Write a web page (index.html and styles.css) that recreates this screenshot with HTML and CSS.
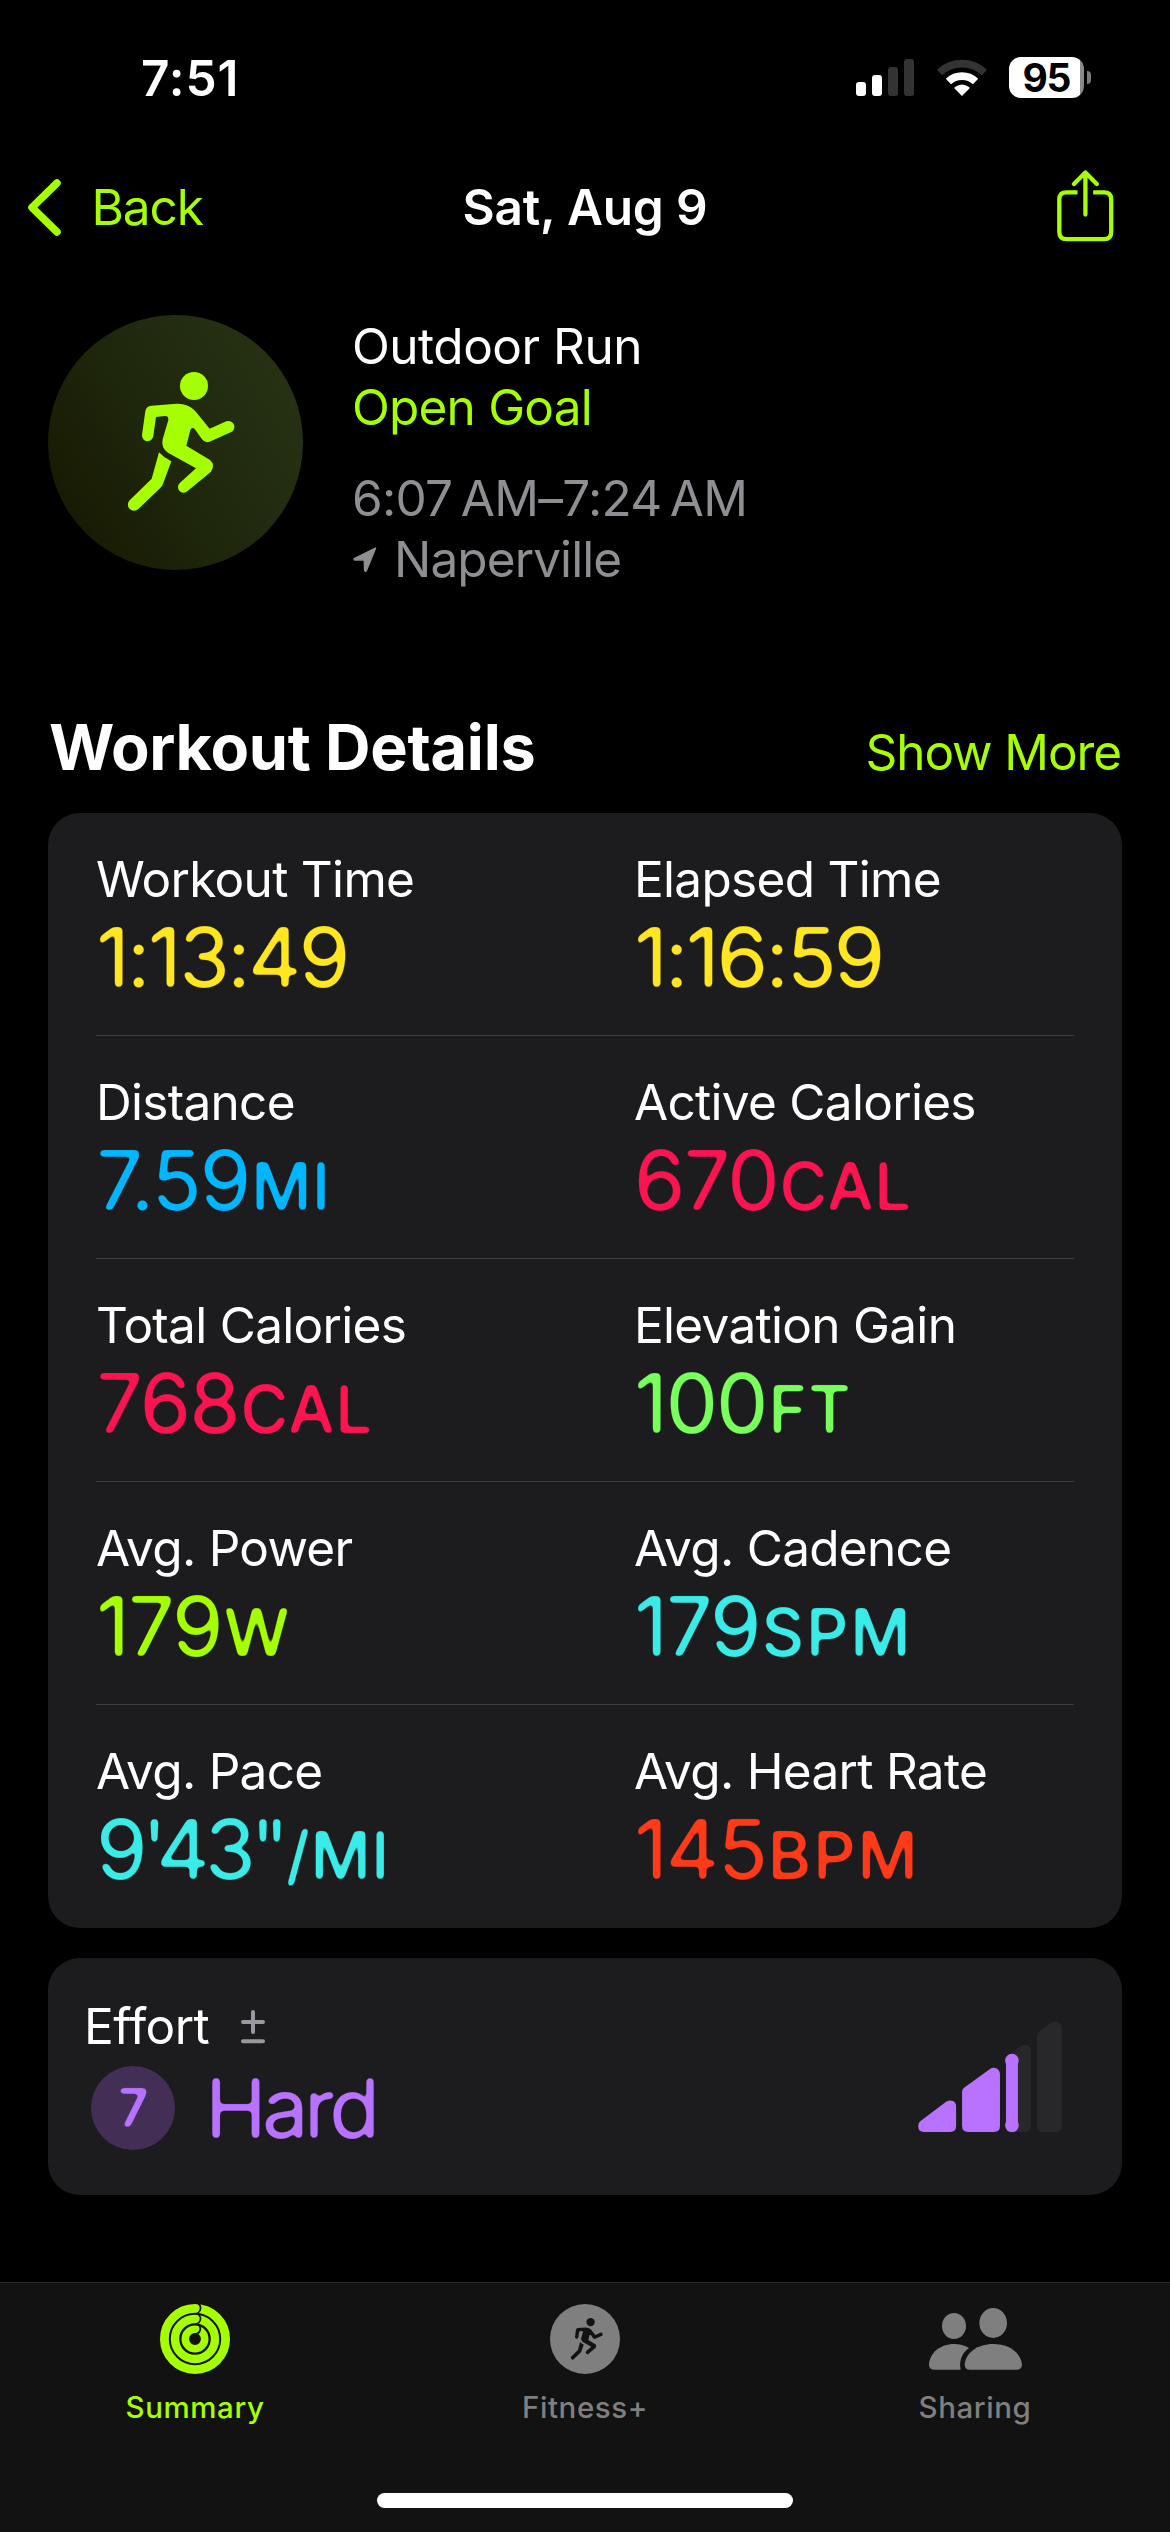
FILE: index.html
```
<!DOCTYPE html>
<html lang="en">
<head>
    <meta charset="UTF-8">
    <meta name="viewport" content="width=device-width, initial-scale=1.0">
    <title>Workout Summary</title>
    <link rel="stylesheet" href="styles.css">
</head>
<body>
    <!-- shared svg definitions -->
    <svg class="defs" width="0" height="0" aria-hidden="true">
        <filter id="rounded" x="-5%" y="-10%" width="110%" height="120%" color-interpolation-filters="sRGB">
            <feGaussianBlur stdDeviation="2.1"/>
            <feComponentTransfer>
                <feFuncA type="linear" slope="5" intercept="-2"/>
            </feComponentTransfer>
        </filter>
        <symbol id="runner" viewBox="54 45 765 765">
            <circle cx="492" cy="258" r="42"/>
            <path d="M364 317 L440 311 C468 310 486 321 500 338 L539 386 L589 364 A17 17 0 0 1 602 397 L539 425 Q525 430 516 418 L494 387 Q486 379 481 390 L469 437 L540 480 Q557 495 543 515 L472 574 A17 17 0 0 1 450 548 L498 505 L414 458 Q392 444 398 418 L415 360 Q416 348 406 348 L378 351 L370 408 A17 17 0 0 1 336 405 L346 333 Q349 318 364 317 Z"/>
            <path d="M387 457 Q402 474 424 484 L400 549 Q397 559 390 565 L325 627 A18 18 0 0 1 299 601 L365 536 Z"/>
        </symbol>
    </svg>

    <header class="status-bar">
        <span class="time">7:51</span>
        <div class="status-icons">
            <svg width="58" height="41" viewBox="0 0 58 41">
                <rect x="0" y="25" width="10" height="14" rx="3" fill="#fff"/>
                <rect x="16" y="18" width="10" height="21" rx="3" fill="#fff"/>
                <rect x="32" y="10" width="10" height="29" rx="3" fill="#333"/>
                <rect x="48" y="2" width="10" height="37" rx="3" fill="#333"/>
            </svg>
            <svg width="50" height="41" viewBox="0 0 50 41">
                <path d="M2.5 15.5 A33 33 0 0 1 47.5 15.5" fill="none" stroke="#333" stroke-width="7.6"/>
                <path d="M11.4 24.5 A19.8 19.8 0 0 1 38.6 24.5" fill="none" stroke="#fff" stroke-width="7.6"/>
                <path d="M25 39 L17.6 31.6 Q17 30.6 18 30 Q25 24.8 32 30 Q33 30.6 32.4 31.6 Z" fill="#fff"/>
            </svg>
            <div class="battery">
                <span class="battery-level">95</span>
                <span class="battery-tip"></span>
            </div>
        </div>
    </header>

    <nav class="nav-bar">
        <a class="back">
            <svg width="33" height="57" viewBox="0 0 33 57" fill="none" stroke="currentColor" stroke-width="7.5" stroke-linecap="round" stroke-linejoin="round">
                <path d="M29 4 L4 28.5 L29 53"/>
            </svg>
            <span>Back</span>
        </a>
        <h1 class="nav-title">Sat, Aug 9</h1>
        <a class="share">
            <svg width="57" height="72" viewBox="0 0 57 72" fill="none" stroke="currentColor" stroke-width="4.3">
                <path d="M20.5 22.3 H9.5 Q2.3 22.3 2.3 29.5 V62 Q2.3 69.2 9.5 69.2 H47 Q54.2 69.2 54.2 62 V29.5 Q54.2 22.3 47 22.3 H36.2"/>
                <path d="M28.4 3 V44.5 M17 14 L28.4 2.5 L39.8 14" stroke-linecap="round" stroke-linejoin="round"/>
            </svg>
        </a>
    </nav>

    <section class="hero">
        <div class="hero-icon">
            <svg width="255" height="255"><use href="#runner"/></svg>
        </div>
        <div class="hero-text">
            <p>Outdoor Run</p>
            <p class="goal">Open Goal</p>
            <p class="when">6:07&#8201;AM–7:24&#8201;AM</p>
            <p class="place">
                <svg width="26" height="26" viewBox="38 744 78 82" fill="currentColor" stroke="currentColor" stroke-width="5" stroke-linejoin="round">
                    <path d="M110 748 L43 781 Q42 784 45 785 L75 785 L76 818 Q78 822 81 819 Z"/>
                </svg>
                <span>Naperville</span>
            </p>
        </div>
    </section>

    <div class="section-header">
        <h2>Workout Details</h2>
        <a class="show-more">Show More</a>
    </div>

    <section class="card details">
        <div class="row">
            <div class="metric">
                <div class="label">Workout Time</div>
                <div class="value clock yellow">1:13:49</div>
            </div>
            <div class="metric">
                <div class="label">Elapsed Time</div>
                <div class="value clock yellow">1:16:59</div>
            </div>
        </div>
        <div class="row">
            <div class="metric">
                <div class="label">Distance</div>
                <div class="value blue">7.59<span class="unit">MI</span></div>
            </div>
            <div class="metric">
                <div class="label">Active Calories</div>
                <div class="value pink">670<span class="unit">CAL</span></div>
            </div>
        </div>
        <div class="row">
            <div class="metric">
                <div class="label">Total Calories</div>
                <div class="value pink">768<span class="unit">CAL</span></div>
            </div>
            <div class="metric">
                <div class="label">Elevation Gain</div>
                <div class="value green">100<span class="unit">FT</span></div>
            </div>
        </div>
        <div class="row">
            <div class="metric">
                <div class="label">Avg. Power</div>
                <div class="value lime">179<span class="unit">W</span></div>
            </div>
            <div class="metric">
                <div class="label">Avg. Cadence</div>
                <div class="value cyan">179<span class="unit wide">SPM</span></div>
            </div>
        </div>
        <div class="row">
            <div class="metric">
                <div class="label">Avg. Pace</div>
                <div class="value pace cyan">9'43"<span class="unit">/MI</span></div>
            </div>
            <div class="metric">
                <div class="label">Avg. Heart Rate</div>
                <div class="value red">145<span class="unit wide">BPM</span></div>
            </div>
        </div>
    </section>

    <section class="card effort">
        <div class="effort-info">
            <div class="effort-label">
                <span>Effort</span>
                <svg width="24" height="34" viewBox="0 0 24 34" fill="none" stroke="currentColor" stroke-width="4" stroke-linecap="round">
                    <path d="M2 12 H22 M12 2 V22 M2 31.3 H22"/>
                </svg>
            </div>
            <div class="effort-value">
                <span class="effort-score"><span>7</span></span>
                <span class="effort-name">Hard</span>
            </div>
        </div>
        <svg class="effort-bars" width="144" height="111" viewBox="114 92 432 334">
            <g fill="#28282a">
                <path d="M378 212 Q378 201 387 195 L422 168 Q430 162 439 164 Q453 168 453 182 V408 Q453 426 435 426 H396 Q378 426 378 408 Z"/>
                <path d="M471 138 Q471 129 479 123 L516 96 Q526 90 535 95 Q546 101 546 112 V408 Q546 426 528 426 H489 Q471 426 471 408 Z"/>
            </g>
            <g fill="#b872ff">
                <path d="M121 393 L198 335 Q209 328 219 333 Q228 338 228 349 V408 Q228 426 210 426 H131 Q114 426 114 408 Q114 398 121 393 Z"/>
                <path d="M246 304 Q246 297 253 292 L329 237 Q340 230 350 235 Q360 241 360 252 V408 Q360 426 342 426 H264 Q246 426 246 408 Z"/>
                <circle cx="396" cy="211" r="20.5"/>
                <rect x="378" y="211" width="36" height="196"/>
                <circle cx="396" cy="406" r="20.5"/>
            </g>
        </svg>
    </section>

    <footer class="tab-bar">
        <div class="tabs">
            <a class="tab active">
                <svg width="70" height="70" viewBox="0 0 70 70" fill="none" stroke="currentColor">
                    <circle cx="35" cy="35" r="30.6" stroke-width="8.8"/>
                    <circle cx="35" cy="35" r="20" stroke-width="8.4"/>
                    <circle cx="35" cy="35" r="9.7" stroke-width="7.6"/>
                    <g class="ring-gap" stroke-width="1.7">
                        <path d="M37.5 -1 Q41 1 40.5 4.5 Q40 9 35 10"/>
                        <path d="M36 9.5 Q40.8 11 40.5 15 Q40 19.5 35 20.3"/>
                        <path d="M36 20 Q40.8 21.5 40.3 25.5 Q39.5 29.5 35 30.3"/>
                    </g>
                </svg>
                <span>Summary</span>
            </a>
            <a class="tab">
                <svg width="70" height="70" viewBox="0 0 70 70">
                    <circle cx="35" cy="35" r="35" fill="currentColor"/>
                    <use href="#runner" x="-3.2" y="-3.2" width="76.5" height="76.5" fill="#121212"/>
                </svg>
                <span>Fitness+</span>
            </a>
            <a class="tab">
                <svg width="93" height="70" viewBox="144 102 279 210" fill="currentColor">
                    <ellipse cx="219" cy="168" rx="36" ry="39"/>
                    <ellipse cx="336.5" cy="159" rx="41.5" ry="45"/>
                    <path d="M144 285 C146 248 178 222 219 222 Q245 222 264 234 C244 248 233 272 239 299 H159 Q145 299 144 285 Z"/>
                    <path d="M251 284 C254 248 290 222 337 222 C384 222 420 248 423 284 Q422 299 407 299 H266 Q252 299 251 284 Z"/>
                </svg>
                <span>Sharing</span>
            </a>
        </div>
        <div class="home-indicator"></div>
    </footer>
</body>
</html>
```
FILE: styles.css
```
* {
    box-sizing: border-box;
    margin: 0;
    padding: 0;
}
body {
    display: flex;
    flex-direction: column;
    min-height: 2532px;
    background: #000;
    color: #fff;
    font-family: Inter, "Liberation Sans", sans-serif;
    font-size: 49.5px;
    line-height: 61px;
    letter-spacing: -0.7px;
}
svg {
    display: block;
    flex: none;
}
.defs {
    position: absolute;
}

/* status bar */
.status-bar {
    display: flex;
    align-items: center;
    justify-content: space-between;
    height: 155px;
    padding: 0 79px 0 141px;
}
.time {
    padding-top: 1px;
    font-weight: 600;
    letter-spacing: 0.9px;
}
.status-icons {
    display: flex;
    align-items: center;
    gap: 22.5px;
}
.battery {
    display: flex;
    align-items: center;
    gap: 3.5px;
}
.battery-level {
    width: 74.5px;
    height: 41px;
    border-radius: 12px;
    background: linear-gradient(to right, #fff 71px, #8a8a8a 71px);
    color: #000;
    font-size: 39px;
    font-weight: 700;
    line-height: 41px;
    letter-spacing: -1.5px;
    text-align: center;
}
.battery-tip {
    width: 4px;
    height: 13px;
    border-radius: 0 4px 4px 0;
    background: #7a7a7a;
}

/* navigation */
.nav-bar {
    display: grid;
    grid-template-columns: 1fr auto 1fr;
    align-items: center;
    height: 104px;
    padding: 0 56px 0 28px;
    color: #a6ff00;
}
.back {
    display: flex;
    align-items: center;
    gap: 30.5px;
    letter-spacing: -1.1px;
}
.nav-title {
    margin-left: 28px;
    color: #fff;
    font-size: 49.5px;
    font-weight: 600;
    letter-spacing: -0.2px;
}
.share {
    justify-self: end;
    padding-bottom: 3px;
}

/* workout heading */
.hero {
    display: flex;
    gap: 49px;
    padding: 56px 48px 0;
}
.hero-icon {
    width: 255px;
    height: 255px;
    border-radius: 50%;
    background: linear-gradient(60deg, #171a02 10%, #1f280d 50%, #273214 90%);
    color: #a6ff00;
    fill: currentColor;
}
.hero-text {
    padding-top: 1px;
    letter-spacing: -0.5px;
}
.goal {
    color: #a6ff00;
    letter-spacing: -0.8px;
}
.when {
    margin-top: 30px;
    color: #8e8e93;
    letter-spacing: -0.7px;
}
.place {
    display: flex;
    align-items: center;
    gap: 16px;
    color: #8e8e93;
    letter-spacing: -0.9px;
}

.section-header {
    display: flex;
    align-items: baseline;
    justify-content: space-between;
    margin: 119px 49px 28px 49px;
}
.section-header h2 {
    font-size: 63px;
    font-weight: 700;
    line-height: 76px;
    letter-spacing: -0.3px;
}
.show-more {
    color: #a6ff00;
    letter-spacing: -1.1px;
}

/* cards */
.card {
    margin: 0 48px;
    border-radius: 32px;
    background: #1c1c1e;
}
.details {
    padding: 0 48px;
}
.row {
    display: grid;
    grid-template-columns: 538px 1fr;
    height: 223px;
    padding-top: 36px;
    border-bottom: 1px solid #3d3d40;
}
.row:last-child {
    border-bottom: none;
}
.value {
    margin-top: 7px;
    font-size: 83px;
    line-height: 80px;
    letter-spacing: -2px;
    white-space: nowrap;
    filter: url(#rounded);
}
.clock {
    letter-spacing: -2.9px;
}
.pace {
    letter-spacing: -5.4px;
}
.unit {
    margin-left: 2px;
    font-size: 66px;
    font-weight: 500;
    letter-spacing: 0.5px;
}
.wide {
    letter-spacing: 2px;
}
.yellow { color: #ffe620; }
.blue { color: #00b7ff; }
.pink { color: #fc1450; }
.green { color: #79ff5c; }
.lime { color: #a6ff00; }
.cyan { color: #3aebe7; }
.red { color: #ff3a18; }

/* effort */
.effort {
    display: flex;
    align-items: center;
    justify-content: space-between;
    height: 237px;
    margin-top: 30px;
    padding: 0 60px 0 36px;
}
.effort-info {
    padding-bottom: 7px;
}
.effort-label {
    display: flex;
    align-items: center;
    gap: 32px;
    letter-spacing: -0.5px;
}
.effort-label svg {
    color: #98989f;
}
.effort-value {
    display: flex;
    align-items: center;
    gap: 30px;
    margin: 9px 0 0 7px;
    color: #b872ff;
}
.effort-score {
    display: flex;
    align-items: center;
    justify-content: center;
    width: 84px;
    height: 84px;
    border-radius: 50%;
    background: #432f55;
    font-size: 53px;
    font-weight: 600;
}
.effort-score span {
    filter: url(#rounded);
}
.effort-name {
    font-size: 83px;
    line-height: 84px;
    letter-spacing: -4.6px;
    filter: url(#rounded);
}

/* tab bar */
.tab-bar {
    height: 250px;
    margin-top: auto;
    padding-top: 21px;
    border-top: 1px solid #2b2b2b;
    background: #121212;
}
.tabs {
    display: flex;
}
.tab {
    display: flex;
    flex: 1;
    flex-direction: column;
    align-items: center;
    gap: 15px;
    color: #7f7f7f;
    font-size: 29.5px;
    font-weight: 500;
    line-height: 36px;
    letter-spacing: 0.6px;
}
.tab.active {
    color: #a6ff00;
}
.ring-gap {
    stroke: #121212;
}
.home-indicator {
    width: 416px;
    height: 15px;
    margin: 68px auto 0;
    border-radius: 8px;
    background: #fff;
}
```
